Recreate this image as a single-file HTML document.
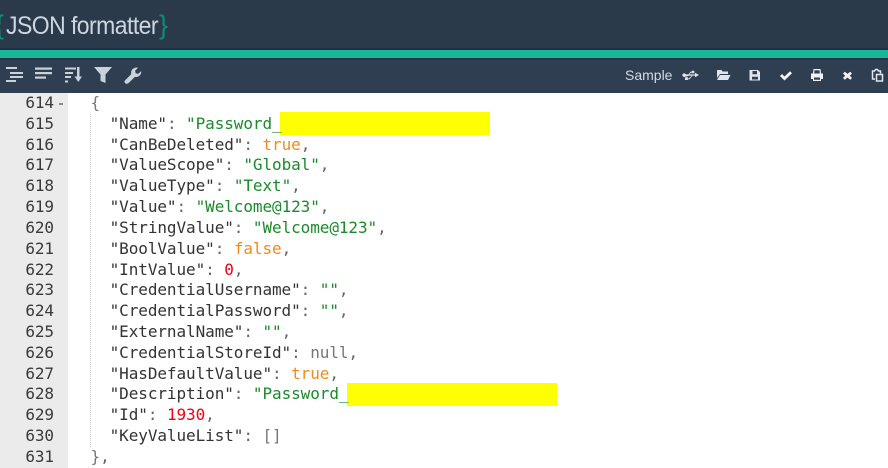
<!DOCTYPE html>
<html><head><meta charset="utf-8"><style>
html,body{margin:0;padding:0;width:888px;height:468px;overflow:hidden;background:#fff}
#w{position:absolute;left:0;top:0;width:888px;height:468px;overflow:hidden;filter:blur(.3px)}
#h{position:absolute;left:0;top:0;width:888px;height:48px;background:#2b3a4a}
.t{position:absolute;font:300 25px/34px "Liberation Sans",sans-serif;white-space:nowrap}
#t{left:6px;top:9px;color:#cdd6e0;letter-spacing:-.6px;transform:scaleX(.92);transform-origin:0 0}
.br{color:#128a78;font-size:27px;top:8px}
#l0{position:absolute;left:0;top:48px;width:888px;height:2px;background:#1f2d4a}
#g{position:absolute;left:0;top:49.500px;width:888px;height:8.500px;background:#18b795}
#b{position:absolute;left:0;top:58px;width:888px;height:35px;background:#2f3e50}
#b2{position:absolute;left:0;top:0;width:888px;height:2px;background:#26344a}
#s{position:absolute;left:625px;top:9px;font:14px/17px "Liberation Sans",sans-serif;color:#d3dae2}
svg{position:absolute;left:0;top:58px}
#gut{position:absolute;left:0;top:93px;width:68px;height:375px;background:#ebebeb}
.c{position:absolute;left:0;top:93px;font:16px/20.82px "DejaVu Sans Mono",monospace;color:#333;white-space:pre;margin:0;letter-spacing:-.08px}
#n{width:54px;text-align:right;top:93px;color:#3a3a3a}
#code{left:90.500px;top:93px;color:#666}
.k{color:#333}.s{color:#1a8a2a}.o{color:#f28a1c}.r{color:#f00010}.m{color:#777}
.y{position:absolute;background:#ffff00;height:23px}
#i{position:absolute;left:90px;top:114px;width:0;height:333px;border-left:1px dotted #ccc}
#f{position:absolute;left:59px;top:103px;width:4px;height:1.500px;background:#888}
</style></head><body><div id="w">
<div id="h"><div class="t br" style="left:-5px">{</div><div class="t" id="t">JSON formatter</div><div class="t br" style="left:159px">}</div></div>
<div id="l0"></div><div id="g"></div>
<div id="b"><div id="b2"></div><div id="s">Sample</div></div>
<svg width="888" height="35" viewBox="0 58 888 35" fill="#c9d1da">
<g><rect x="6" y="67" width="11" height="2"/><rect x="10" y="72" width="13" height="2"/><rect x="10" y="76" width="13" height="2"/><rect x="6" y="80" width="10" height="2"/></g>
<g><rect x="35" y="67.500" width="17" height="2.200"/><rect x="35" y="72" width="17" height="2.200"/><rect x="35" y="76.500" width="11" height="2.200"/></g>
<g><rect x="65" y="67.500" width="11" height="2"/><rect x="65" y="72" width="8" height="2"/><rect x="65" y="76" width="6" height="2"/><rect x="65" y="80.500" width="3" height="2"/><path d="M77 67h2.500v9.500h2.500l-3.700 5.500-3.800-5.500h2.500z"/></g>
<path d="M94 67h18l-6.500 7.500v8.500l-5-2v-6.500z"/>
<path d="M124.500 81l6.800-7c-.8-2.900 1-6 5-6.500l1.800.2-3 3 .6 2.500 2.500.7 3-2.800c.4 3.800-2.700 6.600-6.300 5.800l-6.500 6.400c-2.100 1.500-4.400-.4-3.900-2.300z"/>
<path fill="#dfe5ea" d="M682 75l2-2 2 1.400h9v-1.700l4 2.300-4 2.300v-1.700h-3.500l-2.500 2.800h-1.200v-1.100h-2.800v2.700h2.800v-.7h1.800l2.800-3.700h-3.400l-2 .9h-1.500l-1.500.9zM688.500 74.400l2-2.700h1.200v-1h2.600v2.600h-2.600v-.7h-.7l-1.500 1.800z"/>
<path fill="#dfe5ea" d="M717 70h4.500l1 1.500h5.500v2.500h-8l-3 4zM720 75h10.500l-2.500 5h-11z"/>
<path fill="#dfe5ea" fill-rule="evenodd" d="M749.500 70h8.500l2 2v8.500h-10.500zM752.500 71v3.200h4.500v-3.200zM752 76.800v2.700h6v-2.700z"/>
<path fill="#f0f3f6" d="M780 76l2-2 2.500 2.500 5.500-5.300 2 2-7.500 7.300z"/>
<path fill="#f0f3f6" fill-rule="evenodd" d="M813.500 69h7l.5 4.500h2v5.500h-2v2h-8v-2h-2v-5.500h2zM814.500 70.200l-.3 3.300h5.600l-.3-3.300zM814 77.500v2.300h6v-2.300z"/>
<path fill="#f0f3f6" d="M843 73.500l1.800-1.800 2.700 2.200 2.700-2.200 1.800 1.800-2.200 2.200 2.200 2.300-1.800 1.800-2.700-2.300-2.700 2.300-1.800-1.800 2.200-2.300z"/>
<path fill="none" stroke="#e3e8ed" stroke-width="1.500" d="M875 79h-2.500v-8h2l1-1.500h2l1 1.500h2v2.500M876.500 74.500h3l3 0v6.500h-6z"/>
</svg>
<div id="gut"></div>
<pre class="c" id="n">614
615
616
617
618
619
620
621
622
623
624
625
626
627
628
629
630
631</pre>
<div id="f"></div>
<div id="i"></div>
<div class="y" style="left:280px;top:112px;width:210px"></div>
<div class="y" style="left:347px;top:383px;width:210px"></div>
<pre class="c" id="code"><span class="m">{</span>
  <span class="k">"Name"</span>: <span class="s">"Password_</span>
  <span class="k">"CanBeDeleted"</span>: <span class="o">true</span>,
  <span class="k">"ValueScope"</span>: <span class="s">"Global"</span>,
  <span class="k">"ValueType"</span>: <span class="s">"Text"</span>,
  <span class="k">"Value"</span>: <span class="s">"Welcome@123"</span>,
  <span class="k">"StringValue"</span>: <span class="s">"Welcome@123"</span>,
  <span class="k">"BoolValue"</span>: <span class="o">false</span>,
  <span class="k">"IntValue"</span>: <span class="r">0</span>,
  <span class="k">"CredentialUsername"</span>: <span class="s">""</span>,
  <span class="k">"CredentialPassword"</span>: <span class="s">""</span>,
  <span class="k">"ExternalName"</span>: <span class="s">""</span>,
  <span class="k">"CredentialStoreId"</span>: <span class="m">null</span>,
  <span class="k">"HasDefaultValue"</span>: <span class="o">true</span>,
  <span class="k">"Description"</span>: <span class="s">"Password_</span>
  <span class="k">"Id"</span>: <span class="r">1930</span>,
  <span class="k">"KeyValueList"</span>: <span class="m">[]</span>
<span class="m">}</span>,</pre>
</div></body></html>
